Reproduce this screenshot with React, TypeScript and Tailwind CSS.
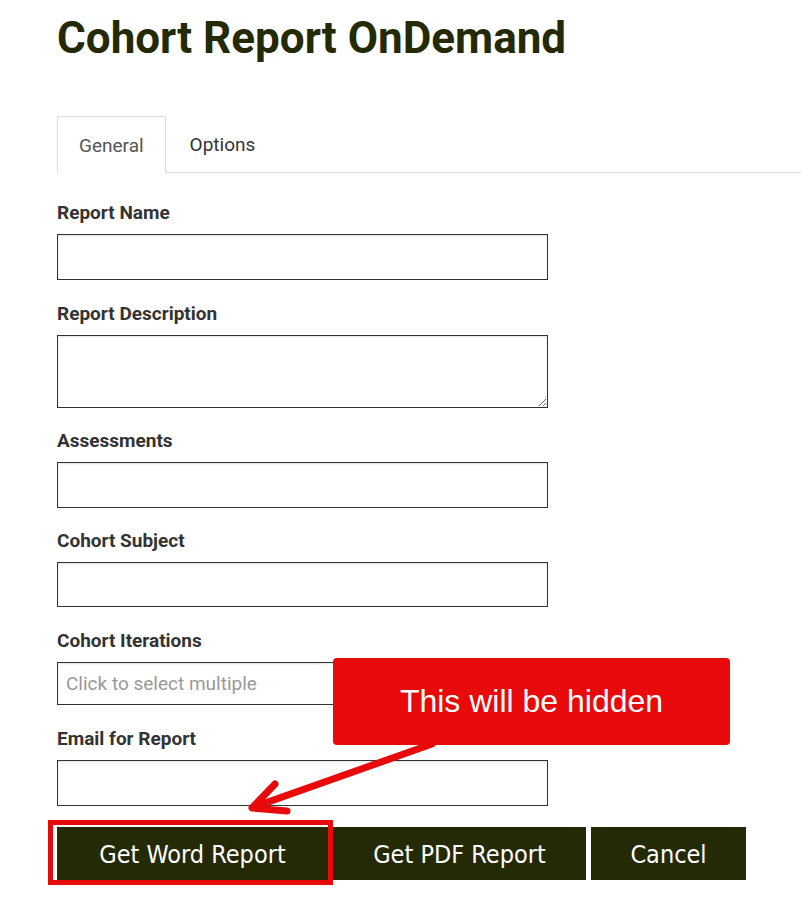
import React from "react";

const dark = "bg-[#252a06]";

const Field = ({ label, children }: { label: string; children: React.ReactNode }) => (
  <div className="flex flex-col">
    <label className="text-[19px] font-bold leading-[24px] text-[#333] mb-[9px]">{label}</label>
    {children}
  </div>
);

const inputCls =
  "w-[491px] border border-[#333] bg-white shadow-[inset_0_1px_2px_rgba(0,0,0,0.12)] px-2 text-[19px] outline-none";

export default function App() {
  return (
    <div className="relative min-h-[919px] w-full bg-white font-['Roboto',sans-serif]">
      <div className="pl-[57px] pt-[14px]">
        <h1 className="text-[44px] font-bold leading-[48px] text-[#252a06]">Cohort Report OnDemand</h1>

        <div className="mt-[54px] flex border-b border-[#ddd]">
          <div className="-mb-px h-[57px] border border-b-0 border-[#ddd] bg-white px-[21px] flex items-center pt-[2px] text-[19px] text-[#555]">
            General
          </div>
          <div className="h-[56px] px-[24px] flex items-center pt-[2px] text-[19px] text-[#333]">Options</div>
        </div>

        <div className="mt-[28px] flex flex-col gap-[21px]">
          <Field label="Report Name">
            <input className={`${inputCls} h-[46px]`} />
          </Field>
          <div className="mt-px">
            <Field label="Report Description">
              <textarea className={`${inputCls} h-[73px] block`} />
            </Field>
          </div>
          <Field label="Assessments">
            <input className={`${inputCls} h-[46px]`} />
          </Field>
          <Field label="Cohort Subject">
            <input className={`${inputCls} h-[45px]`} />
          </Field>
          <div className="mt-px">
            <Field label="Cohort Iterations">
              <input
                className={`${inputCls} h-[43px] placeholder:text-[#999]`}
                placeholder="Click to select multiple"
              />
            </Field>
          </div>
          <div className="mt-px">
            <Field label="Email for Report">
              <input className={`${inputCls} h-[46px]`} />
            </Field>
          </div>
        </div>

        <div className="mt-[21px] flex gap-[5px] font-['DejaVu_Sans_Condensed','DejaVu_Sans',sans-serif] text-[25px] text-white">
          <div className="relative">
            <button className={`${dark} h-[53px] w-[271px] pt-[3px]`}>Get Word Report</button>
            <span className="pointer-events-none absolute -left-[9px] -top-[7px] -right-[5px] -bottom-[5px] border-[5px] border-[#e8090a]" />
          </div>
          <button className={`${dark} h-[53px] w-[253px] pt-[3px]`}>Get PDF Report</button>
          <button className={`${dark} h-[53px] w-[155px] pt-[3px]`}>Cancel</button>
        </div>
      </div>

      {/* annotation callout */}
      <div className="absolute left-[333px] top-[658px] flex h-[87px] w-[397px] items-center justify-center rounded-[4px] bg-[#e8090a] pb-[2px] font-['Liberation_Sans',Arial,sans-serif] text-[32px] text-white">
        This will be hidden
      </div>
      <svg className="pointer-events-none absolute left-0 top-0" width="801" height="919">
        <g stroke="#e8090a" strokeWidth="7" strokeLinecap="round" strokeLinejoin="round" fill="none">
          <line x1="432" y1="744" x2="254" y2="807" />
          <polyline points="275,784 252,808 287,811" />
        </g>
      </svg>
    </div>
  );
}
